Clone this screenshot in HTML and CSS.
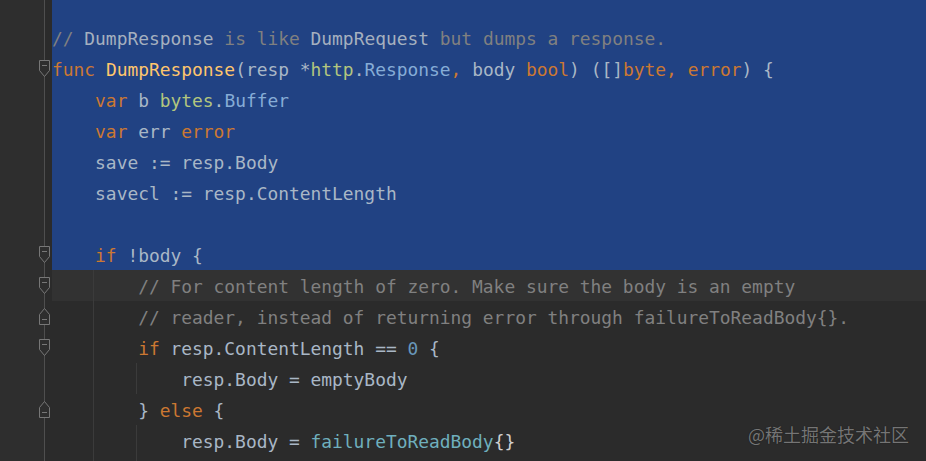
FILE: index.html
```html
<!DOCTYPE html>
<html>
<head>
<meta charset="utf-8">
<link rel="stylesheet" href="styles.css">
</head>
<body>
<div class="editor">
  <div class="row top"><div class="gutter"></div><div class="code sel"></div></div>
  <div class="row"><div class="gutter"></div><div class="code sel"><span class="cm">// </span><span class="cmref">DumpResponse</span><span class="cm"> is like </span><span class="cmref">DumpRequest</span><span class="cm"> but dumps a response.</span></div></div>
  <div class="row"><div class="gutter"><svg class="fold" viewBox="0 0 13 19" width="13" height="19"><path d="M1.5 1.5h10v10l-5 6l-5-6z" /><path class="minus" d="M4 6.5h5"/></svg></div><div class="code sel"><span class="kw">func</span> <span class="fn">DumpResponse</span>(resp *<span class="pkg">http</span>.<span class="ty">Response</span><span class="kw">,</span> body <span class="kw">bool</span>) ([]<span class="kw">byte</span><span class="kw">,</span> <span class="kw">error</span>) {</div></div>
  <div class="row"><div class="gutter"></div><div class="code sel">    <span class="kw">var</span> b <span class="pkg">bytes</span>.<span class="ty">Buffer</span></div></div>
  <div class="row"><div class="gutter"></div><div class="code sel">    <span class="kw">var</span> err <span class="kw">error</span></div></div>
  <div class="row"><div class="gutter"></div><div class="code sel">    save := resp.Body</div></div>
  <div class="row"><div class="gutter"></div><div class="code sel">    savecl := resp.ContentLength</div></div>
  <div class="row"><div class="gutter"></div><div class="code sel"></div></div>
  <div class="row"><div class="gutter"><svg class="fold" viewBox="0 0 13 19" width="13" height="19"><path d="M1.5 1.5h10v10l-5 6l-5-6z" /><path class="minus" d="M4 6.5h5"/></svg></div><div class="code sel">    <span class="kw">if</span> !body {</div></div>
  <div class="row"><div class="gutter"><svg class="fold" viewBox="0 0 13 19" width="13" height="19"><path d="M1.5 1.5h10v10l-5 6l-5-6z" /><path class="minus" d="M4 6.5h5"/></svg></div><div class="code g1 current"><span class="cm">        // For content length of zero. Make sure the body is an empty</span></div></div>
  <div class="row"><div class="gutter"><svg class="fold" viewBox="0 0 13 19" width="13" height="19"><path d="M6.5 1.5l5 6v10h-10v-10z" /><path class="minus" d="M4 12.5h5"/></svg></div><div class="code g1"><span class="cm">        // reader, instead of returning error through failureToReadBody{}.</span></div></div>
  <div class="row"><div class="gutter"><svg class="fold" viewBox="0 0 13 19" width="13" height="19"><path d="M1.5 1.5h10v10l-5 6l-5-6z" /><path class="minus" d="M4 6.5h5"/></svg></div><div class="code g1">        <span class="kw">if</span> resp.ContentLength == <span class="num">0</span> {</div></div>
  <div class="row"><div class="gutter"></div><div class="code g2">            resp.Body = emptyBody</div></div>
  <div class="row"><div class="gutter"><svg class="fold" viewBox="0 0 13 19" width="13" height="19"><path d="M6.5 1.5l5 6v10h-10v-10z" /><path class="minus" d="M4 12.5h5"/></svg></div><div class="code g1">        } <span class="kw">else</span> {</div></div>
  <div class="row"><div class="gutter"></div><div class="code g2">            resp.Body = <span class="st">failureToReadBody</span><span class="br">{}</span></div></div>
  <div class="row"><div class="gutter"></div><div class="code g2"></div></div>
  <div class="watermark">@稀土掘金技术社区</div>
</div>
</body>
</html>
```
FILE: styles.css
```css
html, body {
  margin: 0;
  padding: 0;
  background: #2b2b2b;
}
.editor {
  position: relative;
  width: 926px;
  height: 461px;
  overflow: hidden;
  background: #2b2b2b;
  font-family: "DejaVu Sans Mono", "Liberation Mono", monospace;
  font-size: 17.9px;
  color: #a9b7c6;
}
.row {
  display: flex;
  height: 31px;
}
.row.top {
  height: 22px;
}
.gutter {
  width: 52px;
  flex: none;
  display: flex;
  align-items: center;
  padding-left: 38px;
  box-sizing: border-box;
  background: linear-gradient(90deg, #2e2e2e 44px, #4f4f4f 44px, #4f4f4f 45px, #2b2b2b 45px);
}
.fold {
  display: block;
}
.fold path {
  fill: #2e2e2e;
  stroke: #777;
  stroke-width: 1;
}
.fold path.minus {
  fill: none;
}
.code {
  flex: 1;
  white-space: pre;
  line-height: 29px;
  padding-top: 2px;
}
.code.sel {
  background: #214283;
}
.code.current {
  background-color: #323232;
}
.code.g1 {
  background-image: linear-gradient(90deg, transparent 41px, #3b3b3b 41px, #3b3b3b 42px, transparent 42px);
}
.code.g2 {
  background-image: linear-gradient(90deg, transparent 41px, #3b3b3b 41px, #3b3b3b 42px, transparent 42px, transparent 84px, #3b3b3b 84px, #3b3b3b 85px, transparent 85px);
}
.cm { color: #808080; }
.cmref { color: #a5b0bf; }
.kw { color: #cc7832; }
.fn { color: #ffc66d; }
.pkg { color: #b3c67e; }
.ty { color: #86acd6; }
.num { color: #6897bb; }
.st { color: #6fafbd; }
.br { color: #d0d0d0; }
.watermark {
  position: absolute;
  left: 748px;
  top: 421px;
  font-family: "Noto Sans CJK SC", sans-serif;
  font-size: 18px;
  line-height: 26px;
  color: rgba(150, 150, 150, 0.75);
  text-shadow: 0 0 1px rgba(0,0,0,0.6);
}
```
